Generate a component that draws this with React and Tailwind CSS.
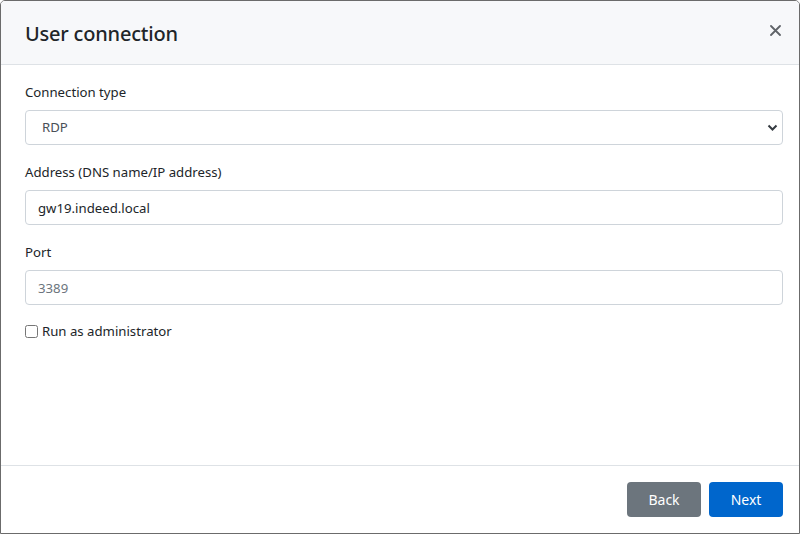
import { useState } from "react";

function Field({ label, children }) {
  return (
    <div className="flex flex-col">
      <label className="text-[13.2px] leading-[21px] text-[#212529] mb-[7px]">{label}</label>
      {children}
    </div>
  );
}

export default function App() {
  const [type, setType] = useState("RDP");
  const [address, setAddress] = useState("gw19.indeed.local");
  const [admin, setAdmin] = useState(false);

  return (
    <div
      className="w-[800px] h-[534px] bg-white border border-[#6b6b6b] rounded-t-[5px] flex flex-col overflow-hidden"
      style={{ fontFamily: '"Noto Sans", "Segoe UI", Arial, sans-serif' }}
    >
      <div className="h-[64px] shrink-0 bg-[#f7f8fa] border-b border-[#dee2e6] flex items-center justify-between pl-6 pr-[16px]">
        <h5 className="text-[20px] font-medium text-[#212529] tracking-[-0.2px] mt-[3px]">User connection</h5>
        <button className="text-[#6c757d] w-4 h-4 flex items-center justify-center -mt-[5px]">
          <svg width="11" height="11" viewBox="0 0 11 11">
            <path d="M1 1L10 10M10 1L1 10" stroke="#5f6368" strokeWidth="1.8" strokeLinecap="round" />
          </svg>
        </button>
      </div>

      <div className="flex-1 flex flex-col gap-[17px] pt-[17px] pl-6 pr-4">
        <Field label="Connection type">
          <div className="relative">
            <select
              value={type}
              onChange={e => setType(e.target.value)}
              className="w-full h-[35px] appearance-none border border-[#ced4da] rounded-[4px] pl-4 text-[13.2px] text-[#495057] bg-white outline-none"
            >
              <option>RDP</option>
              <option>SSH</option>
            </select>
            <svg className="absolute right-[5px] top-[14px] pointer-events-none" width="11" height="8" viewBox="0 0 11 8">
              <path d="M1.5 1.5L5.5 5.5L9.5 1.5" stroke="#343a40" strokeWidth="2" fill="none" />
            </svg>
          </div>
        </Field>

        <Field label="Address (DNS name/IP address)">
          <input
            value={address}
            onChange={e => setAddress(e.target.value)}
            className="w-full h-[35px] border border-[#ced4da] rounded-[4px] px-3 text-[13.2px] text-[#212529] outline-none"
          />
        </Field>

        <Field label="Port">
          <input
            placeholder="3389"
            className="w-full h-[35px] border border-[#ced4da] rounded-[4px] px-3 text-[13.2px] text-[#212529] placeholder:text-[#6c757d] outline-none"
          />
        </Field>

        <label className="flex items-center gap-[4px] text-[13.2px] leading-[21px] text-[#212529] -mt-[1px]">
          <input
            type="checkbox"
            checked={admin}
            onChange={e => setAdmin(e.target.checked)}
            className="w-[13px] h-[13px] m-0"
          />
          Run as administrator
        </label>
      </div>

      <div className="h-[68px] shrink-0 border-t border-[#dee2e6] flex items-center justify-end gap-2 pr-4">
        <button className="w-[74px] h-[35px] rounded-[4px] bg-[#6c757d] text-white text-[14px]">Back</button>
        <button className="w-[74px] h-[35px] rounded-[4px] bg-[#0066cc] text-white text-[14px]">Next</button>
      </div>
    </div>
  );
}
